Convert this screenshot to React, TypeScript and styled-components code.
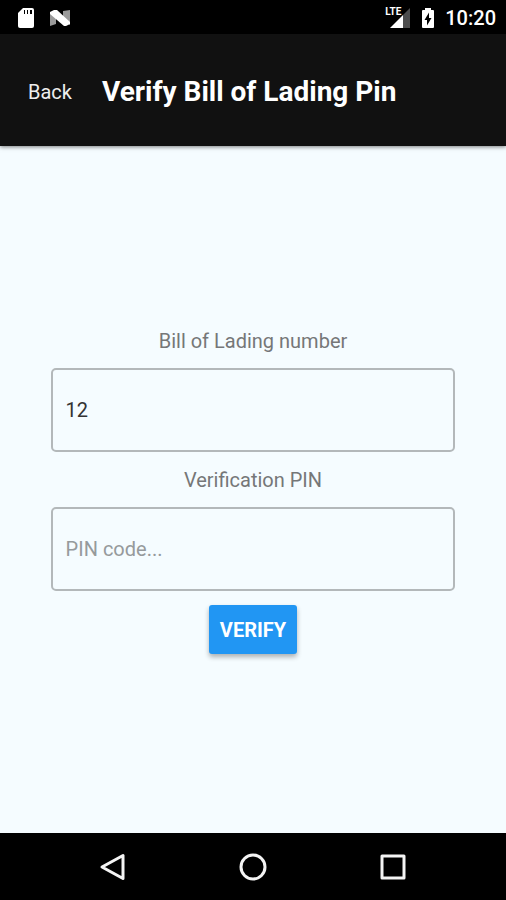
import React, { useState } from "react";
import styled, { createGlobalStyle } from "styled-components";

const GlobalStyle = createGlobalStyle`
  * { box-sizing: border-box; }
  body {
    margin: 0;
    background: #f5fcff;
    font-family: Roboto, "Liberation Sans", sans-serif;
  }
`;

const Screen = styled.div`
  display: flex;
  flex-direction: column;
  min-height: 100vh;
  background: #f5fcff;
`;

const StatusBar = styled.div`
  display: flex;
  align-items: center;
  justify-content: space-between;
  height: 34px;
  padding: 1px 10px 0 17px;
  background: #000;
  color: #fff;
`;

const StatusGroup = styled.div<{ $gap: number }>`
  display: flex;
  align-items: center;
  gap: ${(p) => p.$gap}px;
`;

const Signal = styled.span`
  position: relative;
  display: flex;
  width: 26px;
  height: 22px;
`;

const NetworkType = styled.span`
  position: absolute;
  top: 0;
  left: 0;
  font-family: "Liberation Sans Narrow", Roboto, sans-serif;
  font-size: 10px;
  font-weight: 700;
  line-height: 10px;
`;

const Clock = styled.time`
  font-size: 20px;
  font-weight: 500;
  line-height: 24px;
`;

const Header = styled.header`
  position: relative;
  display: flex;
  align-items: center;
  gap: 30px;
  height: 112px;
  padding: 4px 28px 0;
  background: #111;
  box-shadow: 0 1px 4px rgba(0, 0, 0, 0.5);
`;

const BackButton = styled.button`
  padding: 0;
  border: 0;
  background: none;
  color: #eee;
  font: 400 20px/24px Roboto, sans-serif;
  cursor: pointer;
`;

const Title = styled.h1`
  margin: 0;
  color: #fff;
  font-size: 28px;
  font-weight: 700;
  line-height: 32px;
`;

const Form = styled.form`
  flex: 1;
  display: flex;
  flex-direction: column;
  align-items: center;
  justify-content: center;
  padding-top: 2px;
`;

const Field = styled.div`
  display: flex;
  flex-direction: column;
  align-items: center;
  width: 80%;
  margin-bottom: 14px;
`;

const Label = styled.label`
  margin-bottom: 13px;
  color: #757778;
  font-size: 20px;
  line-height: 28px;
`;

const TextInput = styled.input`
  width: 100%;
  height: 84px;
  padding: 0 13px;
  border: 2px solid #b3b8ba;
  border-radius: 5px;
  outline: none;
  background: transparent;
  color: #333;
  font: 400 20px/24px Roboto, sans-serif;

  &::placeholder {
    color: #969a9c;
    opacity: 1;
  }
`;

const VerifyButton = styled.button`
  height: 49px;
  padding: 0 11px;
  border: 0;
  border-radius: 3px;
  background: #2196f3;
  box-shadow: 0 3px 5px rgba(0, 0, 0, 0.3);
  color: #fff;
  font: 700 20px/24px Roboto, sans-serif;
  cursor: pointer;
`;

const NavBar = styled.nav`
  display: flex;
  align-items: center;
  justify-content: center;
  gap: 112px;
  height: 67px;
  background: #000;
`;

const NavButton = styled.button`
  display: flex;
  padding: 0;
  border: 0;
  background: none;
  color: #fff;
  cursor: pointer;
`;

const SdCardIcon = () => (
  <svg width="18" height="22" viewBox="0 0 18 22" aria-hidden="true">
    <path fill="#fff" d="M6 1h9a2 2 0 0 1 2 2v16a2 2 0 0 1-2 2H3a2 2 0 0 1-2-2V6z" />
    <path fill="#000" d="M7 3h1v4H7zM10 3h1v4h-1zM13 3h2v4h-2z" />
  </svg>
);

const NougatIcon = () => (
  <svg width="22" height="18" viewBox="0 0 22 18" aria-hidden="true">
    <path fill="#9a9a9a" d="M1 3l6 4v8l-6 2zM14 2l7-1v15l-7-5z" />
    <path fill="#fff" d="M1 3l4-2h3l13 12v2l-4 2h-2L1 5z" />
  </svg>
);

const SignalIcon = () => (
  <svg width="26" height="22" viewBox="0 0 26 22" aria-hidden="true">
    <path fill="#4d4d4d" d="M18 8l7-7v20h-7z" />
    <path fill="#fff" d="M5 21L18 8v13z" />
  </svg>
);

const BatteryIcon = () => (
  <svg width="14" height="22" viewBox="0 0 14 22" aria-hidden="true">
    <path fill="#fff" d="M4 1h6v2h2a1 1 0 0 1 1 1v16a1 1 0 0 1-1 1H2a1 1 0 0 1-1-1V4a1 1 0 0 1 1-1h2z" />
    <path fill="#000" d="M8 5.5L3.5 13H6v5.500L10.500 11H8z" />
  </svg>
);

const NavIcon = ({ children }: { children: React.ReactNode }) => (
  <svg
    width="28"
    height="28"
    viewBox="0 0 28 28"
    fill="none"
    stroke="#f4f4f4"
    strokeWidth="3"
    strokeLinejoin="round"
    aria-hidden="true"
  >
    {children}
  </svg>
);

export default function App() {
  const [billNumber, setBillNumber] = useState("12");
  const [pin, setPin] = useState("");

  return (
    <>
      <GlobalStyle />
      <Screen>
        <StatusBar>
          <StatusGroup $gap={14}>
            <SdCardIcon />
            <NougatIcon />
          </StatusGroup>
          <StatusGroup $gap={10}>
            <Signal>
              <SignalIcon />
              <NetworkType>LTE</NetworkType>
            </Signal>
            <BatteryIcon />
            <Clock>10:20</Clock>
          </StatusGroup>
        </StatusBar>
        <Header>
          <BackButton type="button">Back</BackButton>
          <Title>Verify Bill of Lading Pin</Title>
        </Header>
        <Form onSubmit={(e) => e.preventDefault()}>
          <Field>
            <Label htmlFor="bill-number">Bill of Lading number</Label>
            <TextInput
              id="bill-number"
              value={billNumber}
              onChange={(e) => setBillNumber(e.target.value)}
            />
          </Field>
          <Field>
            <Label htmlFor="pin">Verification PIN</Label>
            <TextInput
              id="pin"
              placeholder="PIN code..."
              value={pin}
              onChange={(e) => setPin(e.target.value)}
            />
          </Field>
          <VerifyButton type="submit">VERIFY</VerifyButton>
        </Form>
        <NavBar>
          <NavButton type="button" aria-label="Back">
            <NavIcon>
              <path d="M24 2.500V25.500L3 14z" />
            </NavIcon>
          </NavButton>
          <NavButton type="button" aria-label="Home">
            <NavIcon>
              <circle cx="14" cy="14" r="12" />
            </NavIcon>
          </NavButton>
          <NavButton type="button" aria-label="Recent apps">
            <NavIcon>
              <rect x="3" y="3" width="22" height="22" />
            </NavIcon>
          </NavButton>
        </NavBar>
      </Screen>
    </>
  );
}
